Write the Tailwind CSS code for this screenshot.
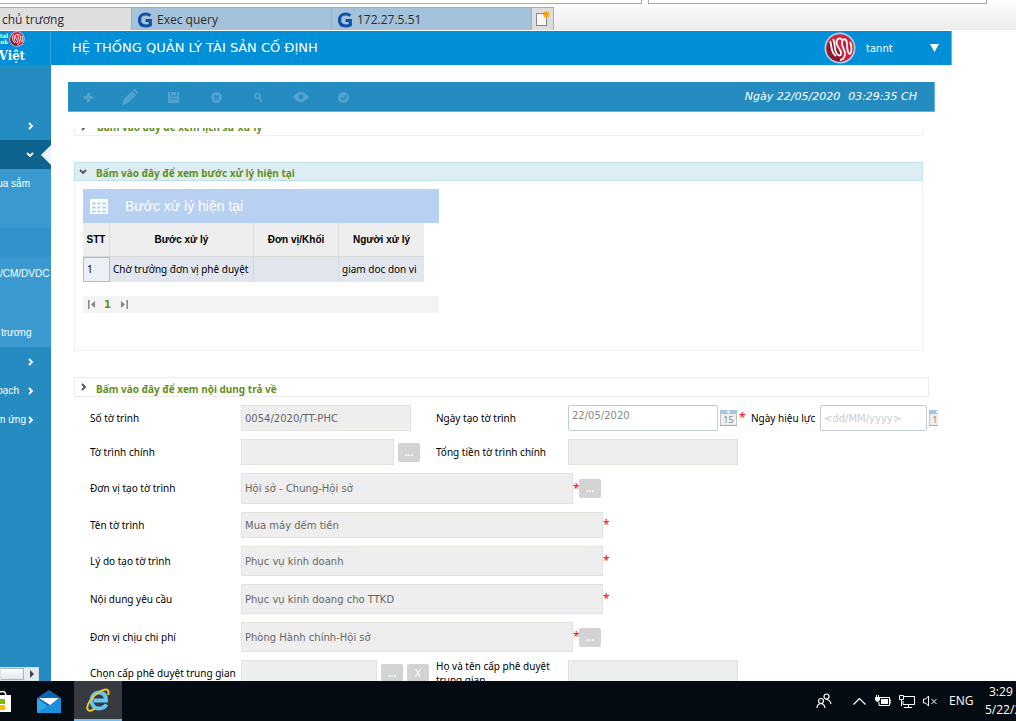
<!DOCTYPE html>
<html lang="vi">
<head>
    <meta charset="UTF-8">
    <meta name="viewport" content="width=device-width, initial-scale=1.0">
    <script src="https://cdn.jsdelivr.net/npm/@tailwindcss/browser@4"></script>
    <title>Hệ thống quản lý tài sản cố định</title>
</head>
<body class="h-screen flex flex-col overflow-hidden bg-white text-black text-[10px] font-['DejaVu_Sans',Verdana,sans-serif]">
    <!-- Shared icon shapes -->
    <svg class="hidden">
        <symbol id="logo" viewBox="0 0 32 32">
            <circle cx="16" cy="16" r="15.5" fill="#a5d1f2"/>
            <circle cx="16" cy="16" r="13.8" fill="#d5203a"/>
            <path d="M3 20C5 28 14 31 19 29L14 14 6 8Q2 13 3 20z" fill="#8f1a2b"/>
            <path d="M6 9C8 12 6 20 12 24M9 7C12 11 9 19 14 23C17 25 18 21 16 18C13 14 11 9 14 7C17 5 19 8 18 11C17 15 22 18 21 23C20 26 18 28 16 28M19 8C21 6 23 8 23 12C23 17 24 22 26 22C28 20 28 14 26 10" fill="none" stroke="#fff" stroke-width="1.8"/>
        </symbol>
        <symbol id="right" viewBox="0 0 8 8"><path d="M2 1l3 3-3 3" fill="none" stroke="currentColor" stroke-width="1.8"/></symbol>
        <symbol id="down" viewBox="0 0 8 8"><path d="M1 2l3 3 3-3" fill="none" stroke="currentColor" stroke-width="1.8"/></symbol>
        <symbol id="cal" viewBox="0 0 17 16">
            <rect x=".5" y=".5" width="16" height="15" rx="1" fill="#eee" stroke="#c3c3c3"/>
            <rect width="17" height="4" fill="#a9c6df"/>
            <circle cx="8.500" cy="2" r="1.300" fill="#fff"/>
            <path d="M0 15.500h17" stroke="#aaa"/>
        </symbol>
    </svg>

    <!-- Browser address row and tabs -->
    <div class="h-[31px] shrink-0 flex flex-col bg-linear-to-b from-white to-[#ececec] border-b border-white">
        <div class="h-1 flex gap-[6px] shrink-0">
            <div class="w-[642px] border-b border-r border-[#a9a9ad] bg-white"></div>
            <div class="w-[339px] border-b border-x border-[#a9a9ad] bg-white"></div>
        </div>
        <div class="flex h-[23px] mt-[3px] text-xs text-[#2b2b2b] font-['Open_Sans','Noto_Sans',sans-serif]">
            <button class="w-[132px] pt-px text-left pl-[2px] bg-[#dedede] border-t border-r border-[#ababab]">chủ trương</button>
            <button class="w-[200px] pt-px flex items-center gap-1 pl-[5px] bg-[#a5c2db] border-t border-r border-[#ababab]">
                <svg class="size-4" viewBox="0 0 16 16"><path d="M13.500 3.500Q11 2 8.800 2C5 2 2.500 4.500 2.500 8C2.500 12 5 14 8.500 14C10.800 14 12.500 13.500 13.300 13V8.500H8.500" fill="none" stroke="#114fa8" stroke-width="3.200"/></svg>
                Exec query
            </button>
            <button class="w-[200px] pt-px flex items-center gap-1 pl-[5px] bg-[#a5c2db] border-t border-r border-[#ababab]">
                <svg class="size-4" viewBox="0 0 16 16"><path d="M13.500 3.500Q11 2 8.800 2C5 2 2.500 4.500 2.500 8C2.500 12 5 14 8.500 14C10.800 14 12.500 13.500 13.300 13V8.500H8.500" fill="none" stroke="#114fa8" stroke-width="3.200"/></svg>
                172.27.5.51
            </button>
            <button aria-label="Tab mới" class="w-[22px] flex items-center justify-center bg-[#dedede] border-t border-r border-[#ababab]">
                <svg class="size-4" viewBox="0 0 16 16"><rect x="1.500" y="2.500" width="10" height="12" fill="#f8f8f8" stroke="#888"/><path d="M11.500 0v7M8 3.500h7M9 1l5 5M14 1l-5 5" stroke="#f0a010" stroke-width="1.200"/></svg>
            </button>
        </div>
    </div>

    <!-- Application -->
    <div class="flex-1 min-h-0 flex flex-col">
        <header class="h-[34px] shrink-0 mr-16 flex items-center bg-[#018fd8] text-white border-r border-[#5cb5e5]">
            <div class="w-[51px] h-full shrink-0 overflow-hidden border-r border-[#3aa8e0] font-bold font-['DejaVu_Serif_Condensed','DejaVu_Serif',serif]">
                <div class="h-4 flex items-center gap-px">
                    <div class="w-2 flex justify-end text-[6px] leading-[6px] whitespace-nowrap text-right">tal<br>nk</div>
                    <svg class="size-4 shrink-0"><use href="#logo"/></svg>
                </div>
                <div class="w-[25px] flex justify-end text-[13px] leading-[18px]">Việt</div>
            </div>
            <h1 class="pl-[21px] flex-1 text-[13px] whitespace-nowrap">HỆ THỐNG QUẢN LÝ TÀI SẢN CỐ ĐỊNH</h1>
            <svg class="size-8 mr-[10px]"><use href="#logo"/></svg>
            <span class="w-16">tannt</span>
            <button aria-label="Tài khoản" class="mr-3"><svg class="w-[9px] h-2" viewBox="0 0 9 8"><path d="M0 0h9L4.500 8z" fill="#fff"/></svg></button>
        </header>

        <div class="flex-1 min-h-0 flex">
            <!-- Sidebar -->
            <nav class="w-[51px] shrink-0 flex flex-col overflow-hidden bg-[#258cc1] text-white text-[10px] font-['Liberation_Sans',Arial,sans-serif]">
                <a href="#" class="h-[75px] pr-4 pb-[10px] flex items-end justify-end"><svg class="size-2"><use href="#right"/></svg></a>
                <a href="#" class="h-[29px] bg-[#0f6391] flex items-center justify-end gap-[7px]">
                    <svg class="size-2"><use href="#down"/></svg>
                    <svg class="w-[10px] h-5" viewBox="0 0 10 20"><path d="M10 0v20L0 10z" fill="#eaf2fb"/></svg>
                </a>
                <div class="bg-[#3a9ad0] h-[178px] shrink-0">
                    <a href="#" class="flex justify-end h-[59px] pt-[7px] pr-[21px] whitespace-nowrap">ua sắm</a>
                    <a href="#" class="block h-[30px] bg-[#3293ca]"></a>
                    <a href="#" class="flex h-[59px] pt-2 whitespace-nowrap">/CM/DVDC</a>
                    <a href="#" class="flex h-[30px] pt-2 pl-px whitespace-nowrap">trương</a>
                </div>
                <a href="#" class="h-[29px] pr-4 flex items-center justify-end"><svg class="size-2"><use href="#right"/></svg></a>
                <a href="#" class="h-[29px] pr-4 flex items-center justify-end gap-2 whitespace-nowrap">oạch<svg class="size-2 shrink-0"><use href="#right"/></svg></a>
                <a href="#" class="h-[29px] pr-4 flex items-center justify-end gap-px whitespace-nowrap">m ứng<svg class="size-2 shrink-0"><use href="#right"/></svg></a>
                <div class="mt-auto h-[14px] w-[39px] flex bg-[#e4eaf0] border border-[#d5dfe8]">
                    <div class="w-[23px] bg-linear-to-b from-white to-[#dfe5ea] border border-l-0 border-[#a9b3bd]"></div>
                    <svg class="ml-1 mt-[2px] size-2" viewBox="0 0 8 8"><path d="M2 0l4 4-4 4z" fill="#444"/></svg>
                </div>
            </nav>

            <main class="flex-1 min-w-0 flex flex-col pl-[17px] pt-[17px]">
                <!-- Toolbar -->
                <div class="h-[30px] shrink-0 mr-[81px] pt-px flex items-center bg-[#258cc1] border-b border-r border-[#62b0db] text-[#51a3cf]">
                    <button aria-label="Thêm" class="w-[41px] flex justify-center"><svg class="size-[11px]" viewBox="0 0 12 12"><path d="M6 1v10M1 6h10" stroke="currentColor" stroke-width="3.500"/></svg></button>
                    <button aria-label="Sửa" class="w-[42px] flex justify-center"><svg class="size-[18px]" viewBox="0 0 18 18"><path d="M1 17l1.500-5.500L11 3l4 4-8.500 8.500zM12 2l1.500-1.500L17.500 4.500 16 6z" fill="currentColor"/></svg></button>
                    <button aria-label="Lưu" class="w-[44px] flex justify-center"><svg class="size-[11px]" viewBox="0 0 11 11"><path d="M0 0h11v11H0z" fill="currentColor"/><path d="M2.500 0v4h6V0M2 7h7" fill="none" stroke="#258cc1"/></svg></button>
                    <button aria-label="Hủy" class="w-[42px] flex justify-center"><svg class="size-[11px]" viewBox="0 0 11 11"><circle cx="5.500" cy="5.500" r="5.500" fill="currentColor"/><path d="M3.500 3.500l4 4m0-4l-4 4" stroke="#258cc1" stroke-width="1.500"/></svg></button>
                    <button aria-label="Tìm" class="w-[42px] flex justify-center"><svg class="size-[11px]" viewBox="0 0 11 11"><circle cx="4.500" cy="4" r="2.500" fill="none" stroke="currentColor" stroke-width="1.600"/><path d="M6 6l3 4" stroke="currentColor" stroke-width="2"/></svg></button>
                    <button aria-label="Xem" class="w-[43px] flex justify-center"><svg class="w-4 h-[10px]" viewBox="0 0 16 10"><path d="M0 5Q8-5 16 5Q8 15 0 5z" fill="currentColor"/><circle cx="8" cy="5" r="2.200" fill="#258cc1"/></svg></button>
                    <button aria-label="Duyệt" class="w-[42px] flex justify-center"><svg class="size-[11px]" viewBox="0 0 11 11"><circle cx="5.500" cy="5.500" r="5.500" fill="currentColor"/><path d="M3 5.500l2 2 3.500-4" fill="none" stroke="#258cc1" stroke-width="1.500"/></svg></button>
                    <div class="ml-auto mr-[17px] flex gap-2 italic text-[11px] text-white whitespace-nowrap"><span>Ngày 22/05/2020</span><span>03:29:35 CH</span></div>
                </div>

                <div class="mt-4 mr-[78px] flex-1 min-h-0 overflow-hidden pl-[6px]">
                    <!-- History panel, scrolled partly out of view -->
                    <button class="-mt-[9px] w-[849px] max-w-full h-[17px] pl-[5px] flex items-center gap-[9px] border border-t-0 border-[#f1f1f1] font-bold text-[#668f1f] font-['Noto_Sans',sans-serif]">
                        <svg class="size-2 text-[#555]"><use href="#right"/></svg>Bấm vào đây để xem lịch sử xử lý
                    </button>

                    <!-- Current step panel -->
                    <section class="mt-[26px] w-[849px] max-w-full">
                        <button class="w-full h-[19px] pl-1 flex items-center gap-[9px] border border-[#bfe2ea] bg-[#dcedf4] font-bold text-[#668f1f] font-['Noto_Sans',sans-serif]">
                            <svg class="size-2 text-[#555]"><use href="#down"/></svg><span class="pt-1">Bấm vào đây để xem bước xử lý hiện tại</span>
                        </button>
                        <div class="h-[170px] border border-t-0 border-[#f1f1f1] pl-2 pt-2 font-['Liberation_Sans',Arial,sans-serif]">
                            <div class="w-[356px]">
                                <h2 class="h-[34px] pl-[7px] flex items-center gap-[17px] bg-[#b8d0f1] text-white text-sm">
                                    <svg class="w-[18px] h-[15px]" viewBox="0 0 18 15"><rect width="18" height="15" rx="1.500" fill="#fff"/><path d="M2 4.500h14M2 8.500h14M2 12.500h14" stroke="#b8d0f1" stroke-width="2"/><path d="M6.500 3v11M11.500 3v11" stroke="#fff" stroke-width="1.500"/></svg>
                                    Bước xử lý hiện tại
                                </h2>
                                <table class="w-[341px] table-fixed border-separate border-spacing-0">
                                    <thead>
                                        <tr class="h-[34px] bg-[#eeeeee]">
                                            <th class="w-[27px] border-r border-b border-[#d9d9d9]">STT</th>
                                            <th class="w-[144px] border-r border-b border-[#d9d9d9]">Bước xử lý</th>
                                            <th class="w-[85px] border-r border-b border-[#d9d9d9]">Đơn vị/Khối</th>
                                            <th class="w-[85px] border-b border-[#d9d9d9]">Người xử lý</th>
                                        </tr>
                                    </thead>
                                    <tbody>
                                        <tr class="h-[25px] bg-[#e1e6ee] whitespace-nowrap font-['Noto_Sans',sans-serif]">
                                            <td class="pl-[3px] bg-[#eceff4] border border-[#8fcbd6]">1</td>
                                            <td class="pl-[3px] border-r border-[#d6dbe2]">Chờ trưởng đơn vị phê duyệt</td>
                                            <td class="border-r border-[#d6dbe2]"></td>
                                            <td class="pl-[3px]">giam doc don vi</td>
                                        </tr>
                                    </tbody>
                                </table>
                                <div class="mt-[14px] h-[17px] pl-1 flex items-center gap-2 bg-[#f3f3f3] text-[#888] font-['DejaVu_Sans',Verdana,sans-serif]">
                                    <button aria-label="Trang đầu"><svg class="size-[9px]" viewBox="0 0 9 9"><path d="M1 0h1.500v9H1zM8 1v7L4 4.500z" fill="currentColor"/></svg></button>
                                    <span class="w-2 font-bold text-[#668f1f]">1</span>
                                    <button aria-label="Trang cuối"><svg class="size-[9px]" viewBox="0 0 9 9"><path d="M6.500 0H8v9H6.500zM1 1v7l4-3.500z" fill="currentColor"/></svg></button>
                                </div>
                            </div>
                        </div>
                    </section>

                    <!-- Return panel -->
                    <button class="mt-[26px] w-[855px] max-w-full h-5 pl-[5px] flex items-center gap-[8px] border border-[#ececec] font-bold text-[#668f1f] font-['Noto_Sans',sans-serif]">
                        <svg class="size-2 text-[#555]"><use href="#right"/></svg><span class="pt-1">Bấm vào đây để xem nội dung trả về</span>
                    </button>

                    <!-- Form -->
                    <form class="mt-2 pl-4 flex flex-col gap-2 whitespace-nowrap font-['Noto_Sans',sans-serif]">
                        <div class="h-[26px] shrink-0 flex items-center">
                            <label for="so" class="w-[151px] shrink-0">Số tờ trình</label>
                            <div class="w-[195px] shrink-0"><input id="so" value="0054/2020/TT-PHC" readonly class="w-[170px] h-[26px] px-[3px] bg-[#eeeeee] border border-[#e3e3db] text-[#666] font-['DejaVu_Sans',sans-serif]"></div>
                            <label for="ngay" class="w-[132px] shrink-0">Ngày tạo tờ trình</label>
                            <input id="ngay" value="22/05/2020" class="w-[150px] shrink-0 h-[26px] px-[3px] pb-[6px] bg-white border border-[#c3cbd6] rounded-xs text-[#888] font-['DejaVu_Sans',sans-serif]">
                            <button type="button" aria-label="Chọn ngày tạo" class="relative ml-[2px] w-[17px] h-4 shrink-0 text-[9px] leading-4 text-[#888]"><svg class="absolute inset-0 w-[17px] h-4"><use href="#cal"/></svg><span class="absolute inset-x-0 top-[2px]">15</span></button>
                            <span class="ml-[2px] w-3 shrink-0 text-xs text-[#ff0000]">*</span>
                            <label for="hieuluc" class="w-[69px] shrink-0">Ngày hiệu lực</label>
                            <input id="hieuluc" placeholder="<dd/MM/yyyy>" class="w-[107px] shrink-0 h-[26px] px-[3px] bg-white border border-[#c3cbd6] rounded-xs placeholder:text-[#ccc] font-['DejaVu_Sans',sans-serif]">
                            <button type="button" aria-label="Chọn ngày hiệu lực" class="relative ml-[2px] w-[17px] h-4 shrink-0 text-[9px] leading-4 text-[#888]"><svg class="absolute inset-0 w-[17px] h-4"><use href="#cal"/></svg><span class="absolute inset-x-0 top-[2px]">15</span></button>
                        </div>
                        <div class="h-[26px] shrink-0 flex items-center">
                            <label for="chinh" class="w-[151px] shrink-0">Tờ trình chính</label>
                            <div class="w-[195px] shrink-0 flex items-center gap-1">
                                <input id="chinh" readonly class="w-[153px] h-[26px] bg-[#eeeeee] border border-[#e3e3db]">
                                <button type="button" class="w-[22px] h-[19px] rounded-xs bg-[#d3d3d3] text-white font-bold">...</button>
                            </div>
                            <label for="tong" class="w-[132px] shrink-0">Tổng tiền tờ trình chính</label>
                            <input id="tong" readonly class="w-[170px] h-[26px] bg-[#eeeeee] border border-[#e3e3db]">
                        </div>
                        <div class="h-[31px] shrink-0 flex items-center">
                            <label for="donvi" class="w-[151px] shrink-0">Đơn vị tạo tờ trình</label>
                            <input id="donvi" value="Hội sở - Chung-Hội sở" readonly class="w-[332px] h-full px-[3px] bg-[#eeeeee] border border-[#e3e3db] text-[#666] font-['DejaVu_Sans',sans-serif]">
                            <span class="w-[6px] text-xs text-[#ff0000]">*</span>
                            <button type="button" class="w-[22px] h-[19px] rounded-xs bg-[#d3d3d3] text-white font-bold">...</button>
                        </div>
                        <div class="h-[26px] shrink-0 flex items-center">
                            <label for="ten" class="w-[151px] shrink-0">Tên tờ trình</label>
                            <input id="ten" value="Mua máy đếm tiền" readonly class="w-[362px] h-full px-[3px] bg-[#eeeeee] border border-[#e3e3db] text-[#666] font-['DejaVu_Sans',sans-serif]">
                            <span class="text-xs text-[#ff0000]">*</span>
                        </div>
                        <div class="h-[30px] shrink-0 flex items-center">
                            <label for="lydo" class="w-[151px] shrink-0">Lý do tạo tờ trình</label>
                            <input id="lydo" value="Phục vụ kinh doanh" readonly class="w-[362px] h-full px-[3px] bg-[#eeeeee] border border-[#e3e3db] text-[#666] font-['DejaVu_Sans',sans-serif]">
                            <span class="text-xs text-[#ff0000]">*</span>
                        </div>
                        <div class="h-[30px] shrink-0 flex items-center">
                            <label for="noidung" class="w-[151px] shrink-0">Nội dung yêu cầu</label>
                            <input id="noidung" value="Phục vụ kinh doang cho TTKD" readonly class="w-[362px] h-full px-[3px] bg-[#eeeeee] border border-[#e3e3db] text-[#666] font-['DejaVu_Sans',sans-serif]">
                            <span class="text-xs text-[#ff0000]">*</span>
                        </div>
                        <div class="h-[30px] shrink-0 flex items-center">
                            <label for="chiphi" class="w-[151px] shrink-0">Đơn vị chịu chi phí</label>
                            <input id="chiphi" value="Phòng Hành chính-Hội sở" readonly class="w-[332px] h-full px-[3px] bg-[#eeeeee] border border-[#e3e3db] text-[#666] font-['DejaVu_Sans',sans-serif]">
                            <span class="w-[6px] text-xs text-[#ff0000]">*</span>
                            <button type="button" class="w-[22px] h-[19px] rounded-xs bg-[#d3d3d3] text-white font-bold">...</button>
                        </div>
                        <div class="h-[26px] shrink-0 flex items-center">
                            <label for="cap" class="w-[151px] shrink-0">Chọn cấp phê duyệt trung gian</label>
                            <div class="w-[195px] shrink-0 flex items-center gap-1">
                                <input id="cap" readonly class="w-[136px] h-[26px] bg-[#eeeeee] border border-[#e3e3db]">
                                <button type="button" class="w-[22px] h-[19px] rounded-xs bg-[#d3d3d3] text-white font-bold">...</button>
                                <button type="button" class="w-[22px] h-[19px] rounded-xs bg-[#d3d3d3] text-white">X</button>
                            </div>
                            <label for="hoten" class="w-[132px] pr-2 shrink-0 leading-[14px] whitespace-normal">Họ và tên cấp phê duyệt trung gian</label>
                            <input id="hoten" readonly class="w-[170px] h-[26px] bg-[#eeeeee] border border-[#e3e3db]">
                        </div>
                    </form>
                </div>
            </main>
        </div>
    </div>

    <!-- Windows taskbar -->
    <footer class="h-10 shrink-0 flex items-center bg-[#050b13] text-white text-xs overflow-hidden font-['Open_Sans','Noto_Sans',sans-serif]">
        <button aria-label="Store" class="w-[25px]"><svg class="w-[11px] h-6" viewBox="0 0 11 24"><path d="M0 3q5-2 6 3" fill="none" stroke="#fff" stroke-width="1.500"/><path d="M0 6h11v17H0z" fill="#fff"/><path d="M0 10h5v5H0z" fill="#7fba00"/><path d="M0 16h5v5H0z" fill="#ffb900"/></svg></button>
        <button aria-label="Mail" class="w-[49px] pr-[2px] flex justify-center"><svg class="w-6 h-[23px]" viewBox="0 0 24 23"><path d="M0 8L12 0l12 8v15H0z" fill="#0f65b5"/><path d="M0 8l12 9 12-9v15H0z" fill="#2fa8ea"/><path d="M0 23L12 15l12-7v15z" fill="#1c8fdc"/><path d="M2 8h20l-9 7z" fill="#fff"/></svg></button>
        <button aria-label="Internet Explorer" class="w-12 h-full flex items-center justify-center bg-[#373b40] border-b-2 border-[#76b9ed]">
            <svg class="w-6 h-6" viewBox="0 0 24 24"><path d="M20.500 16.500C18.500 19.500 16 20.500 13 20.500C8 20.500 5.500 17 5.500 12.500C5.500 7.500 9 4.500 13 4.500C18 4.500 20 8 20 12.500H8" fill="none" stroke="#63c6f5" stroke-width="4"/><path d="M22 7C24 1 20 0 14 3.500C6 8 -1 18 2 22C3.500 23.500 7 22 9 20.500" fill="none" stroke="#f4c430" stroke-width="2"/></svg>
        </button>
        <div class="flex-1"></div>
        <div class="flex items-center shrink-0 w-[200px]">
            <svg class="w-4 h-4 mr-[21px] shrink-0" viewBox="0 0 16 16" fill="none" stroke="#fff" stroke-width="1.200"><circle cx="10.500" cy="3.500" r="2.500"/><circle cx="5" cy="8" r="2.500"/><path d="M1 15q0-4 4-4.500 3.500.500 4 4.500M10 6.500q4 0 5 4.500"/></svg>
            <svg class="w-[13px] h-[7px] mr-[9px] shrink-0" viewBox="0 0 13 7"><path d="M.5 6.500l6-6 6 6" fill="none" stroke="#fff" stroke-width="1.200"/></svg>
            <svg class="w-4 h-3 mr-2 shrink-0" viewBox="0 0 16 12"><path d="M5 2.500h9.500v8H4V7M14.500 5H16v3h-1.500" fill="none" stroke="#fff"/><path d="M6 4h7v5H6zM0 2h5v3L3 7H2L0 5zM1 0h1v2H1zM3 0h1v2H3z" fill="#fff"/></svg>
            <svg class="w-4 h-[13px] mr-2 shrink-0" viewBox="0 0 16 13" fill="none" stroke="#fff"><path d="M5 1.500h10.500v8H4V6M9.500 10v2M5 12.500h8M.5.500h4v4h-4zM2.500 5v6"/></svg>
            <svg class="w-[14px] h-3 mr-3 shrink-0" viewBox="0 0 14 12" fill="none" stroke="#fff"><path d="M.5 4h2l3-3v10l-3-3h-2zM8.500 4l5 5m0-5l-5 5"/></svg>
            <span class="w-9 shrink-0">ENG</span>
            <div class="w-16 shrink-0 leading-[18px] whitespace-nowrap"><div class="pl-1">3:29 PM</div><div>5/22/2020</div></div>
        </div>
    </footer>
</body>
</html>
